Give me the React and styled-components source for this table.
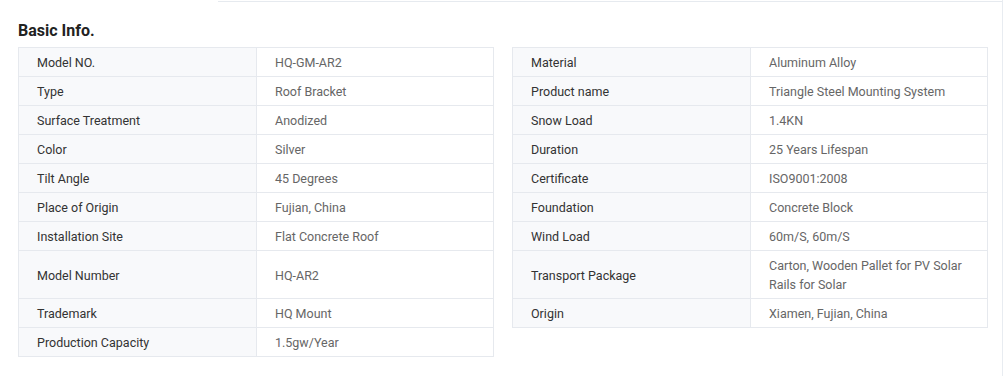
import React from "react";
import styled, { createGlobalStyle } from "styled-components";

const GlobalStyle = createGlobalStyle`
  body {
    margin: 0;
    background: #ffffff;
    font-family: "Roboto", "Liberation Sans", sans-serif;
  }
`;

const StyledPage = styled.div`
  width: 1003px;
  height: 376px;
  border-right: 1px solid #e8ecf1;
  box-sizing: border-box;
  padding: 1px 15px 0 18px;
`;

const StyledTopRule = styled.div`
  height: 1px;
  margin: 0 -15px 0 200px;
  background: #e6eaef;
`;

const StyledTitle = styled.h2`
  margin: 19px 0 6px;
  font-size: 16px;
  line-height: 20px;
  font-weight: 700;
  color: #222222;
`;

const StyledGrid = styled.div`
  display: grid;
  grid-template-columns: 476px 476px;
  column-gap: 18px;
`;

const StyledPair = styled.div`
  display: flex;
  border: 1px solid #e6e9ee;
  border-top-width: ${(props) => (props.$first ? "1px" : "0")};
  font-size: 12.5px;
  line-height: 19px;
`;

const StyledLabel = styled.div`
  display: flex;
  align-items: center;
  width: 238px;
  flex-shrink: 0;
  box-sizing: border-box;
  padding: 5px 17px 4px 18px;
  background: #f8f9fb;
  border-right: 1px solid #e6e9ee;
  color: #333333;
`;

const StyledValue = styled.div`
  display: flex;
  align-items: center;
  flex: 1;
  padding: 5px 17px 4px 18px;
  color: #666666;
`;

const rows = [
  [["Model NO.", "HQ-GM-AR2"], ["Material", "Aluminum Alloy"]],
  [["Type", "Roof Bracket"], ["Product name", "Triangle Steel Mounting System"]],
  [["Surface Treatment", "Anodized"], ["Snow Load", "1.4KN"]],
  [["Color", "Silver"], ["Duration", "25 Years Lifespan"]],
  [["Tilt Angle", "45 Degrees"], ["Certificate", "ISO9001:2008"]],
  [["Place of Origin", "Fujian, China"], ["Foundation", "Concrete Block"]],
  [["Installation Site", "Flat Concrete Roof"], ["Wind Load", "60m/S, 60m/S"]],
  [
    ["Model Number", "HQ-AR2"],
    ["Transport Package", "Carton, Wooden Pallet for PV Solar Rails for Solar"],
  ],
  [["Trademark", "HQ Mount"], ["Origin", "Xiamen, Fujian, China"]],
  [["Production Capacity", "1.5gw/Year"], null],
];

const App = () => (
  <>
    <GlobalStyle />
    <StyledPage>
      <StyledTopRule />
      <StyledTitle>Basic Info.</StyledTitle>
      <StyledGrid>
        {rows.map((row, i) =>
          row.map((pair, j) =>
            pair ? (
              <StyledPair key={`${i}-${j}`} $first={i === 0}>
                <StyledLabel>{pair[0]}</StyledLabel>
                <StyledValue>{pair[1]}</StyledValue>
              </StyledPair>
            ) : (
              <div key={`${i}-${j}`} />
            )
          )
        )}
      </StyledGrid>
    </StyledPage>
  </>
);

export default App;
